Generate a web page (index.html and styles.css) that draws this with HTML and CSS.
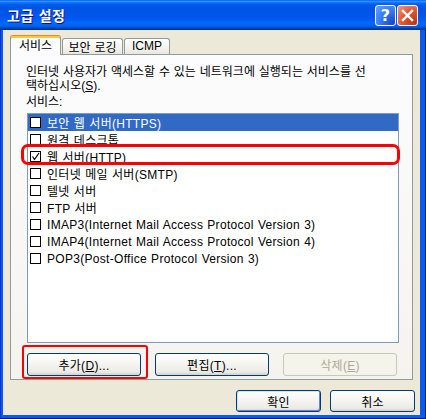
FILE: index.html
```html
<!DOCTYPE html>
<html lang="ko">
<head>
    <meta charset="UTF-8">
    <title>고급 설정</title>
    <link rel="stylesheet" href="styles.css">
</head>
<body>
    <div class="window">
        <div class="titlebar">
            <span class="title">고급 설정</span>
            <div class="caption-buttons">
                <button class="caption-btn help">?</button>
                <button class="caption-btn close">
                    <svg width="13" height="13" viewBox="0 0 13 13">
                        <path d="M2 2 L11 11 M11 2 L2 11" stroke="#fff" stroke-width="2.4" stroke-linecap="square"/>
                    </svg>
                </button>
            </div>
        </div>

        <div class="client">
            <!-- tab strip -->
            <div class="tabs">
                <div class="tab tab-services selected">서비스</div>
                <div class="tab tab-logging">보안 로깅</div>
                <div class="tab tab-icmp">ICMP</div>
            </div>

            <div class="panel">
                <p class="desc">인터넷 사용자가 액세스할 수 있는 네트워크에 실행되는 서비스를 선<br>택하십시오(<u>S</u>).</p>
                <div class="list-label">서비스:</div>

                <ul class="listbox">
                    <li class="item selected"><span class="check"></span>보안 웹 서버(HTTPS)</li>
                    <li class="item"><span class="check"></span>원격 데스크톱</li>
                    <li class="item"><span class="check checked"><svg width="9" height="9" viewBox="0 0 9 9"><polyline points="1.5,4.5 3.5,7.5 8,1" fill="none" stroke="#000" stroke-width="1.2"/></svg></span>웹 서버(HTTP)</li>
                    <li class="item"><span class="check"></span>인터넷 메일 서버(SMTP)</li>
                    <li class="item"><span class="check"></span>텔넷 서버</li>
                    <li class="item"><span class="check"></span>FTP 서버</li>
                    <li class="item"><span class="check"></span>IMAP3(Internet Mail Access Protocol Version 3)</li>
                    <li class="item"><span class="check"></span>IMAP4(Internet Mail Access Protocol Version 4)</li>
                    <li class="item"><span class="check"></span>POP3(Post-Office Protocol Version 3)</li>
                </ul>

                <div class="panel-buttons">
                    <button class="btn panel-btn">추가(<u>D</u>)...</button>
                    <button class="btn panel-btn">편집(<u>T</u>)...</button>
                    <button class="btn panel-btn" disabled>삭제(<u>E</u>)</button>
                </div>

                <!-- red highlight marks drawn over the dialog -->
                <div class="mark mark-row"></div>
                <div class="mark mark-button"></div>
            </div>

            <div class="dialog-buttons">
                <button class="btn dialog-btn default">확인</button>
                <button class="btn dialog-btn">취소</button>
            </div>
        </div>
    </div>
</body>
</html>
```

FILE: styles.css
```css
* {
    box-sizing: border-box;
}

body {
    margin: 0;
    font-family: "Liberation Sans", "Noto Sans CJK KR", sans-serif;
    font-size: 12px;
    color: #000;
    background-color: #fff;
    word-spacing: 0.5px;
}

.window {
    width: 426px;
    height: 419px;
    display: flex;
    flex-direction: column;
    background-color: #0a5bea;
    box-shadow: inset -1px -1px #00138c, inset 1px 0 #0831d9;
}

/* Title bar */
.titlebar {
    height: 30px;
    flex-shrink: 0;
    display: flex;
    align-items: center;
    justify-content: space-between;
    padding: 0 8px 0 7px;
    background: linear-gradient(180deg, #0058ee 0%, #3593ff 4%, #288eff 6%, #127dff 8%, #036ffc 10%, #0262ee 14%, #0057e5 20%, #0054e3 24%, #0055eb 56%, #005bf5 66%, #026afe 76%, #0062ef 86%, #0052d6 92%, #0040ab 94%, #003092 100%);
}

.title {
    color: #fff;
    font-weight: bold;
    font-size: 14px;
    letter-spacing: 0.5px;
    text-shadow: 1px 1px #0f1089;
}

.caption-buttons {
    display: flex;
    gap: 1px;
}

.caption-btn {
    width: 21px;
    height: 21px;
    padding: 0;
    border: 1px solid #fff;
    border-radius: 3px;
    display: flex;
    align-items: center;
    justify-content: center;
    color: #fff;
}

.help {
    font-family: "DejaVu Sans", sans-serif;
    font-weight: bold;
    font-size: 16px;
    background: radial-gradient(circle at 90% 90%, #1a46c9 0%, #3a7cf6 55%, #6aa0ff 100%);
}

.close {
    background: radial-gradient(circle at 90% 90%, #b8361a 0%, #df5a32 55%, #f19a7c 100%);
}

/* Client area */
.client {
    flex: 1;
    margin: 0 6px 4px 3px;
    background-color: #ece9d8;
    padding: 5px 7px 0 7px;
    display: flex;
    flex-direction: column;
}

.tabs {
    display: flex;
    align-items: flex-end;
    height: 19px;
}

.tab {
    height: 16px;
    margin-left: 1px;
    border: 1px solid #919b9c;
    border-bottom: none;
    border-radius: 3px 3px 0 0;
    background: linear-gradient(180deg, #fff 0%, #f4f3ee 60%, #e8e6de 100%);
    display: flex;
    align-items: center;
    justify-content: center;
    padding-bottom: 1px;
    white-space: nowrap;
}

.tab.selected {
    height: 20px;
    margin-left: 0;
    margin-bottom: -1px;
    position: relative;
    z-index: 1;
    background: #fcfcfe;
    border-top-color: #e68b2c;
    box-shadow: inset 0 2px #ffc73c;
    padding-bottom: 3px;
}

.tab-services { width: 51px; }
.tab-logging { width: 61px; }
.tab-icmp { width: 46px; }

.panel {
    position: relative;
    width: 403px;
    height: 326px;
    border: 1px solid #919b9c;
    background: linear-gradient(180deg, #fcfcfe 0%, #f7f6f2 70%, #f4f3ee 100%);
    padding: 10px 12px 0 15px;
}

.desc {
    margin: 0;
    line-height: 14px;
    white-space: nowrap;
}

.list-label {
    margin-top: 2px;
    line-height: 14px;
}

.listbox {
    list-style: none;
    margin: 4px 0 0 1px;
    padding: 0;
    width: 372px;
    height: 230px;
    border: 1px solid #7f9db9;
    background-color: #fff;
}

.item {
    height: 17px;
    display: flex;
    align-items: center;
    padding-left: 2px;
    white-space: nowrap;
    letter-spacing: 0.3px;
}

.item.selected {
    background-color: #316ac5;
    color: #fff;
}

.check {
    width: 11px;
    height: 11px;
    margin-right: 6px;
    border: 1px solid #000;
    background-color: #fff;
    display: flex;
    align-items: center;
    justify-content: center;
}

/* Buttons */
.btn {
    font: inherit;
    word-spacing: inherit;
    letter-spacing: 0.3px;
    color: #000;
    padding: 0;
    border: 1px solid #003c74;
    border-radius: 3px;
    background: linear-gradient(180deg, #fff 0%, #f6f6f2 40%, #ecebe6 85%, #d6d0c5 100%);
}

.btn:disabled {
    color: #aca899;
    border-color: #c9c7ba;
    background: #f5f4ea;
}

.panel-buttons {
    display: flex;
    gap: 14px;
    margin: 10px 0 0 1px;
}

.panel-btn {
    width: 114px;
    height: 23px;
}

.dialog-buttons {
    display: flex;
    justify-content: flex-end;
    gap: 9px;
    margin: 10px -2px 0 0;
}

.dialog-btn {
    width: 85px;
    height: 22px;
}

.dialog-btn.default {
    box-shadow: inset 1px 1px #cee7ff, inset -1px -1px #6982ee;
}

/* Red highlight marks */
.mark {
    position: absolute;
    border-style: solid;
    border-color: #f00;
    pointer-events: none;
}

.mark-row {
    left: 10px;
    top: 89px;
    width: 379px;
    height: 21px;
    border-width: 3px;
    border-radius: 7px;
}

.mark-button {
    left: 11px;
    top: 290px;
    width: 126px;
    height: 34px;
    border-width: 2px;
    border-radius: 3px;
}
```
